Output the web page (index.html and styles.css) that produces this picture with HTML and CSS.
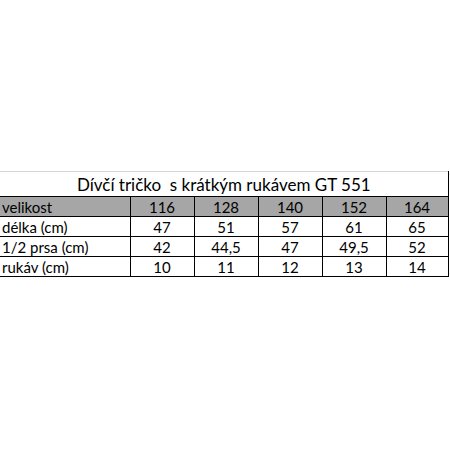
FILE: index.html
```html
<!DOCTYPE html>
<html lang="cs">
<head>
<meta charset="utf-8">
<title>Dívčí tričko s krátkým rukávem GT 551</title>
<link rel="stylesheet" href="styles.css">
</head>
<body>
<div class="sheet">
  <table class="sizes">
    <colgroup>
      <col class="c-label">
      <col class="c-val">
      <col class="c-val">
      <col class="c-val">
      <col class="c-val">
      <col class="c-last">
    </colgroup>
    <tr class="title-row">
      <th colspan="6" class="title">Dívčí tričko&nbsp; s krátkým rukávem GT 551</th>
    </tr>
    <tr class="head-row">
      <td class="label">velikost</td>
      <td>116</td><td>128</td><td>140</td><td>152</td><td>164</td>
    </tr>
    <tr class="row">
      <td class="label">délka (cm)</td>
      <td>47</td><td>51</td><td>57</td><td>61</td><td>65</td>
    </tr>
    <tr class="row">
      <td class="label">1/2 prsa (cm)</td>
      <td>42</td><td>44,5</td><td>47</td><td>49,5</td><td>52</td>
    </tr>
    <tr class="row">
      <td class="label">rukáv (cm)</td>
      <td>10</td><td>11</td><td>12</td><td>13</td><td>14</td>
    </tr>
  </table>
</div>
</body>
</html>
```

FILE: styles.css
```css
html, body {
  margin: 0;
  padding: 0;
  background: #ffffff;
}

.sheet {
  padding-top: 171px;
}

.sizes {
  border-collapse: collapse;
  table-layout: fixed;
  width: 448px;
  font-family: Lato, "Open Sans", "Liberation Sans", sans-serif;
  color: #000000;
}

.c-label { width: 130px; }
.c-val { width: 64px; }
.c-last { width: 62px; }

.title {
  height: 24px;
  padding: 0;
  font-weight: normal;
  font-size: 17px;
  text-align: center;
  vertical-align: bottom;
  line-height: 22px;
  border-top: 1px solid #d4d4d4;
  border-right: 1px solid #000000;
  border-bottom: 1px solid #000000;
}

.sizes td {
  padding: 0;
  font-size: 15px;
  line-height: 18px;
  text-align: center;
  vertical-align: bottom;
  border: 1px solid #000000;
  border-top: none;
}

.sizes td.label {
  text-align: left;
  padding-left: 2px;
  border-left: none;
}

.head-row td {
  background: #a6a6a6;
  height: 19px;
}

.row td {
  height: 19px;
}
```
